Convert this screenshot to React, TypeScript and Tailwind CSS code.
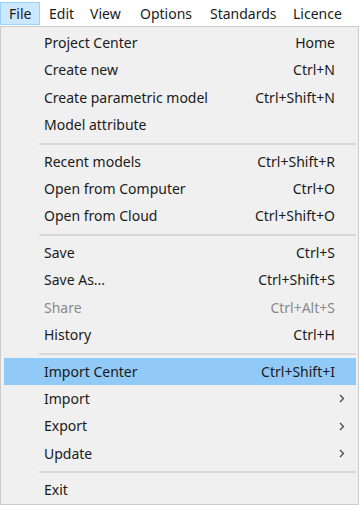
import React from "react";

type Item =
  | { type: "sep" }
  | { type: "item"; label: string; shortcut?: string; sub?: boolean; disabled?: boolean; active?: boolean };

const items: Item[] = [
  { type: "item", label: "Project Center", shortcut: "Home" },
  { type: "item", label: "Create new", shortcut: "Ctrl+N" },
  { type: "item", label: "Create parametric model", shortcut: "Ctrl+Shift+N" },
  { type: "item", label: "Model attribute" },
  { type: "sep" },
  { type: "item", label: "Recent models", shortcut: "Ctrl+Shift+R" },
  { type: "item", label: "Open from Computer", shortcut: "Ctrl+O" },
  { type: "item", label: "Open from Cloud", shortcut: "Ctrl+Shift+O" },
  { type: "sep" },
  { type: "item", label: "Save", shortcut: "Ctrl+S" },
  { type: "item", label: "Save As...", shortcut: "Ctrl+Shift+S" },
  { type: "item", label: "Share", shortcut: "Ctrl+Alt+S", disabled: true },
  { type: "item", label: "History", shortcut: "Ctrl+H" },
  { type: "sep" },
  { type: "item", label: "Import Center", shortcut: "Ctrl+Shift+I", active: true },
  { type: "item", label: "Import", sub: true },
  { type: "item", label: "Export", sub: true },
  { type: "item", label: "Update", sub: true },
  { type: "sep" },
  { type: "item", label: "Exit" },
];

function Chevron() {
  return (
    <svg width="6" height="9" viewBox="0 0 6 9" className="block">
      <polyline points="1,1 4.5,4.5 1,8" fill="none" stroke="#4a4a4a" strokeWidth="1.3" />
    </svg>
  );
}

export default function App() {
  return (
    <div
      className="w-[360px] h-[506px] overflow-hidden bg-white text-[14px] text-[#1a1a1a] leading-none"
      style={{ fontFamily: '"Segoe UI", "Noto Sans", sans-serif' }}
    >
      <div className="h-[26px] flex items-start pt-[2px] bg-white">
        <div className="w-[40px] h-[23px] pl-[8px] flex items-center border border-[#99d1ff] bg-[#cce8ff]">File</div>
        <div className="w-[42px] h-[23px] pl-[9px] flex items-center">Edit</div>
        <div className="w-[49px] h-[23px] pl-[8px] flex items-center">View</div>
        <div className="w-[70px] h-[23px] pl-[9px] flex items-center">Options</div>
        <div className="w-[83px] h-[23px] pl-[9px] flex items-center">Standards</div>
        <div className="h-[23px] pl-[9px] flex items-center">Licence</div>
      </div>
      <div className="w-[359px] border border-[#cccccc] bg-[#f0f0f0] pt-[2.33px] pl-[3px] pr-[2px]">
        {items.map((it, idx) =>
          it.type === "sep" ? (
            <div key={idx} className="h-[9.33px] flex items-center pl-[35px]">
              <div className="w-full h-[2px] mt-[1px] bg-[#d9d9d9]" />
            </div>
          ) : (
            <div
              key={idx}
              className={
                "h-[27.33px] flex items-center pl-[40px] pr-[21px] " +
                (it.active ? "bg-[#91c9f7]" : "") +
                (it.disabled ? " text-[#8a8a8a]" : "")
              }
            >
              <span className="flex-1">{it.label}</span>
              {it.shortcut && <span>{it.shortcut}</span>}
              {it.sub && (
                <span className="mr-[-10px]">
                  <Chevron />
                </span>
              )}
            </div>
          )
        )}
      </div>
    </div>
  );
}
